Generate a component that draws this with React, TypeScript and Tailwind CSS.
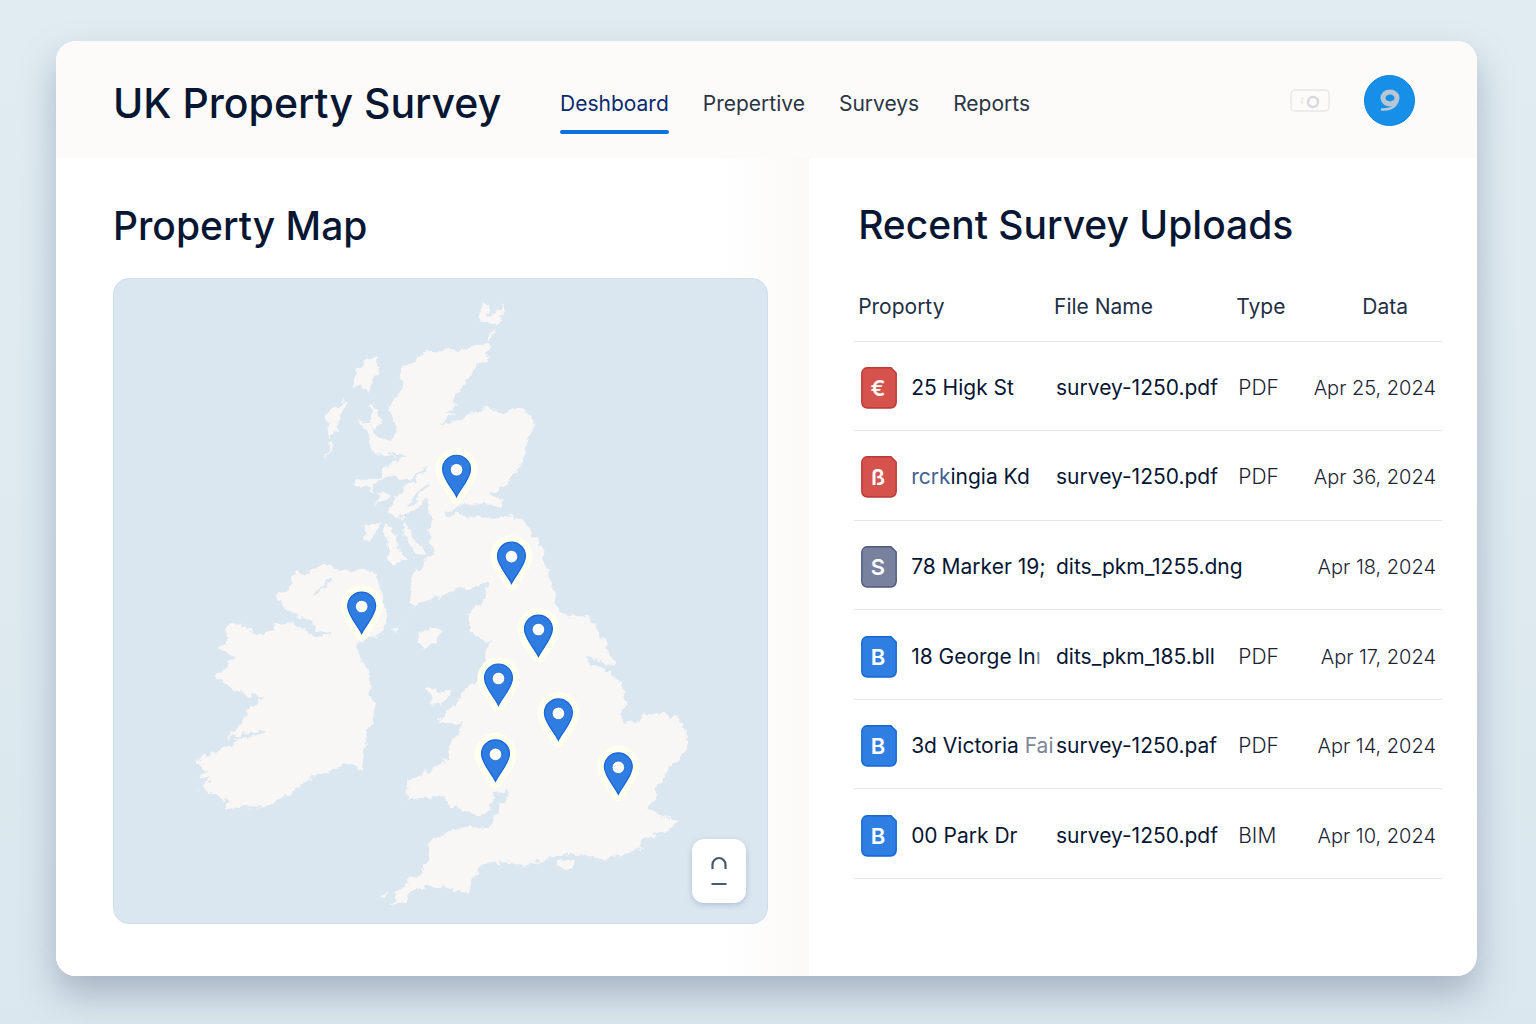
import React from "react";

const navItems = ["Deshboard", "Prepertive", "Surveys", "Reports"];

const pins = [
    { x: 456, y: 497, name: "Edinburgh" },
    { x: 511, y: 584, name: "Newcastle" },
    { x: 361, y: 634, name: "Belfast" },
    { x: 538, y: 657, name: "Leeds" },
    { x: 498, y: 706, name: "Liverpool" },
    { x: 558, y: 741, name: "Nottingham" },
    { x: 495, y: 782, name: "Cardiff" },
    { x: 618, y: 795, name: "London" },
];

const colors = {
    red: { fill: "#d5524d", stroke: "#b93a37" },
    slate: { fill: "#78829f", stroke: "#4d5a80" },
    blue: { fill: "#2f7fe2", stroke: "#1767d3" },
};

type Upload = {
    letter: string;
    color: keyof typeof colors;
    faded?: string;
    property: string;
    tail?: string;
    file: string;
    type: string;
    date: string;
};

const uploads: Upload[] = [
    { letter: "€", color: "red", property: "25 Higk St", file: "survey-1250.pdf", type: "PDF", date: "Apr 25, 2024" },
    { letter: "ß", color: "red", faded: "rcrk", property: "ingia Kd", file: "survey-1250.pdf", type: "PDF", date: "Apr 36, 2024" },
    { letter: "S", color: "slate", property: "78 Marker 19;", file: "dits_pkm_1255.dng", type: "", date: "Apr 18, 2024" },
    { letter: "B", color: "blue", property: "18 George In", tail: "ı", file: "dits_pkm_185.bll", type: "PDF", date: "Apr 17, 2024" },
    { letter: "B", color: "blue", property: "3d Victoria ", tail: "Fai", file: "survey-1250.paf", type: "PDF", date: "Apr 14, 2024" },
    { letter: "B", color: "blue", property: "00 Park Dr", file: "survey-1250.pdf", type: "BIM", date: "Apr 10, 2024" },
];

function FileBadge({ letter, color }: { letter: string; color: keyof typeof colors }) {
    const c = colors[color];
    return (
        <svg width="36" height="42" viewBox="0 0 36 42" className="shrink-0" aria-hidden="true">
            <path
                d="M6 .8H30L35.200 6V35.500a5.500 5.500 0 0 1-5.500 5.500H6.300A5.500 5.500 0 0 1 .8 35.500V6.300A5.500 5.500 0 0 1 6 .8Z"
                fill={c.fill}
                stroke={c.stroke}
                strokeWidth="1.4"
            />
            <text x="17" y="29" textAnchor="middle" fill="#fff" fontSize="22" fontWeight="600" fontFamily="Inter, sans-serif">
                {letter}
            </text>
        </svg>
    );
}

function Pin({ x, y, name }: { x: number; y: number; name: string }) {
    const shape = "M0 0C-3-7-14-18-14-27.500A14 14 0 0 1 14-27.500C14-18 3-7 0 0Z";
    return (
        <g transform={`translate(${x} ${y})`}>
            <title>{name}</title>
            <path d={shape} fill="#fffff0" stroke="#fffff0" strokeWidth="14" strokeLinejoin="round" />
            <path d={shape} fill="#2f7de0" stroke="#1864d6" strokeWidth="1.2" />
            <circle cy="-27" r="6.300" fill="#fff" stroke="#1864d6" strokeWidth=".8" />
        </g>
    );
}

function UkMap() {
    return (
        <svg viewBox="113 279 654 645" className="block w-full" role="img" aria-label="Map of surveyed properties">
            <defs>
                <filter id="coast" x="-5%" y="-5%" width="110%" height="110%">
                    <feTurbulence type="fractalNoise" baseFrequency="0.11" numOctaves="4" seed="4" />
                    <feDisplacementMap in="SourceGraphic" scale="11" xChannelSelector="R" yChannelSelector="G" />
                </filter>
            </defs>
            <g fill="#f9f7f6" filter="url(#coast)">
                {/* Great Britain */}
                <path d="M490 343L486 358 475 367 466 382 455 394 452 400 456 406 446 412 455 414 438 423 452 424 465 418 480 410 492 409 505 412 517 408 527 412 534 421 532 432 527 442 523 458 517 472 508 482 498 490 489 493 498 497 503 508 488 505 475 506 462 504 456 509 446 514 470 517 490 518 510 517 520 520 529 528 533 536 539 547 545 565 548 580 554 592 556 604 558 613 567 616 585 616 595 625 597 635 606 641 605 650 611 656 613 666 600 663 583 656 590 665 600 668 610 672 620 682 624 692 624 702 619 715 624 722 636 722 645 716 662 713 675 719 686 730 686 745 680 758 670 767 666 777 659 784 655 790 656 800 650 806 648 812 660 817 679 820 672 828 660 834 645 840 640 848 625 856 608 858 597 860 583 855 570 854 557 858 537 863 520 867 505 863 487 863 477 872 469 880 469 887 465 893 454 893 449 887 430 887 417 890 410 895 403 902 391 905 400 897 397 893 403 887 408 880 425 870 430 853 428 845 440 838 450 832 470 828 488 828 494 815 503 803 508 789 495 793 492 803 488 813 477 817 457 810 443 798 430 798 408 800 405 783 417 777 443 767 448 750 457 733 461 722 447 723 438 721 453 708 460 694 477 682 485 655 488 642 477 637 467 623 468 613 482 603 488 585 470 587 450 592 437 598 413 607 409 597 413 577 423 563 435 550 428 540 432 520 428 513 427 497 413 513 397 518 387 510 397 497 413 480 393 478 377 480 383 467 407 457 387 450 397 433 395 420 387 408 397 397 403 387 400 377 403 368 415 360 420 352 447 351 467 348Z" />
                {/* Ireland */}
                <path d="M323 565L330 568 353 572 370 569 377 580 382 597 388 620 383 632 367 640 357 645 360 657 367 673 368 693 375 707 370 727 363 750 360 770 343 765 330 773 313 777 297 790 280 798 267 807 240 807 223 812 228 800 200 790 210 780 200 777 207 770 195 767 203 757 223 750 238 742 225 740 240 727 247 712 263 697 240 695 215 677 232 657 217 647 227 640 223 627 240 625 260 637 280 623 293 623 310 635 320 638 332 630 320 632 303 620 288 613 277 598 287 590 293 575 310 572Z" />
                {/* Northern and western isles */}
                <path d="M376 357L378 370 367 390 352 384 357 370 366 360ZM347 399L339 420 330 441 328 428 324 417ZM334 442L325 461 328 446ZM482 302L488 304 487 317 496 314 504 306 503 313 495 325 478 320ZM494 326L490 342 487 334ZM357 419L369 424 376 438 392 444 386 452 396 459 372 452 367 437ZM372 405L381 415 375 432 368 422ZM350 484L362 478 377 478 371 492ZM378 493L392 493 376 506ZM363 527L380 520 370 542 364 538ZM385 522L392 530 404 560 391 565 386 550ZM402 518L412 535 425 556 416 556 404 536Z" />
                {/* Isle of Man, Anglesey, Isle of Wight */}
                <path d="M418 635L428 631 440 630 436 644 423 648 419 643ZM425 686L436 691 453 692 443 704 431 708ZM555 865L564 859 577 861 567 871ZM392 628L399 626 397 635ZM378 896L385 892 384 899Z" />
            </g>
            {/* Sea lochs */}
            <g fill="none" stroke="#dbe7f0" strokeWidth="3" strokeLinecap="round" filter="url(#coast)">
                <path d="M396 494L424 470M410 504L426 486M330 578L316 594M228 740L262 733M446 514L480 512" />
            </g>
            {pins.map((pin) => (
                <Pin key={pin.name} {...pin} />
            ))}
        </svg>
    );
}

export default function App() {
    return (
        <div className="min-h-screen bg-gradient-to-b from-[#e1ecf2] to-[#dbe7ee] pt-[41px] pr-[59px] pb-12 pl-14 font-[Inter,sans-serif] text-[#061633]">
            <div className="overflow-hidden rounded-[20px] bg-white shadow-[0_18px_36px_rgba(80,95,125,0.38)]">
                {/* ===== Header ===== */}
                <header className="flex h-[117px] items-center bg-[#fcfbf9] pr-[62px] pl-[57px]">
                    <h1 className="w-[447px] pt-1.5 text-[41px] leading-[48px] font-medium whitespace-nowrap">UK Property Survey</h1>
                    <nav className="flex gap-[34px] pt-6 text-[21px] leading-7 text-[#2b3444]">
                        {navItems.map((item, i) => (
                            <a key={item} href="#" className={i === 0 ? "text-[#0a2a6c]" : ""}>
                                {item}
                                <span
                                    className={
                                        i === 0
                                            ? "mt-3 block h-1 rounded-full bg-[#0f72dc]"
                                            : "mt-3 block h-1"
                                    }
                                />
                            </a>
                        ))}
                    </nav>
                    <div className="ml-auto flex items-center gap-[34px] pt-0.5">
                        <button type="button" aria-label="Camera">
                            <svg width="40" height="24" viewBox="0 0 40 24" fill="none" stroke="#e8e8e9">
                                <rect x="1" y="1" width="38" height="21" rx="4" strokeWidth="1.5" />
                                <path d="M12 15V10l2-1" strokeWidth="1.5" />
                                <circle cx="23" cy="13" r="5" stroke="#d8d9dc" strokeWidth="2.500" />
                            </svg>
                        </button>
                        <button
                            type="button"
                            aria-label="Account"
                            className="flex size-[51px] items-center justify-center rounded-full border border-[#0b80df] bg-[#158fe8]"
                        >
                            <svg width="22" height="24" viewBox="0 0 22 24" fill="none" stroke="#b9c6d4" strokeLinecap="round">
                                <ellipse cx="11" cy="9" rx="7" ry="6" strokeWidth="5" />
                                <path d="M18.500 9C19 16 13 21 3 20.500" strokeWidth="2.500" />
                            </svg>
                        </button>
                    </div>
                </header>

                <main className="grid grid-cols-[53fr_47fr]">
                    {/* ===== Property map ===== */}
                    <section className="bg-[linear-gradient(to_right,#ffffff_88%,#fbf9f8)] pt-11 pr-[41px] pb-[52px] pl-[57px]">
                        <h2 className="text-[39px] leading-[48px] font-medium">Property Map</h2>
                        <div className="relative mt-7 overflow-hidden rounded-2xl border border-[#cddeea] bg-[#dbe7f0]">
                            <UkMap />
                            <button
                                type="button"
                                aria-label="Map view"
                                className="absolute right-[21px] bottom-5 flex h-16 w-[54px] items-center justify-center rounded-xl bg-white shadow-[0_2px_6px_rgba(90,125,160,0.35)]"
                            >
                                <svg width="18" height="30" viewBox="0 0 18 30" fill="none" stroke="#475a70" strokeWidth="2.200">
                                    <path d="M2.500 13V8.500a6.500 6.500 0 0 1 13 0V13M1.500 28H16.500" />
                                </svg>
                            </button>
                        </div>
                    </section>

                    {/* ===== Recent uploads ===== */}
                    <section className="pt-[43px] pr-[35px] pl-[45px]">
                        <h2 className="pl-1 text-[39px] leading-[48px] font-medium">Recent Survey Uploads</h2>
                        <table className="mt-[17px] h-[613px] w-full table-fixed text-left text-[21px] leading-7 whitespace-nowrap">
                            <colgroup>
                                <col className="w-[34%]" />
                                <col className="w-[31%]" />
                                <col className="w-[11%]" />
                                <col />
                            </colgroup>
                            <thead>
                                <tr className="h-[75px] border-b border-[#e6e7e9] text-[#222f45]">
                                    <th className="pt-2 pl-1 font-normal">Proporty</th>
                                    <th className="pt-2 font-normal">File Name</th>
                                    <th className="pt-2 font-normal">Type</th>
                                    <th className="pt-2 pr-[34px] text-right font-normal">Data</th>
                                </tr>
                            </thead>
                            <tbody>
                                {uploads.map((u, i) => (
                                    <tr key={i} className="border-b border-[#e6e7e9]">
                                        <td className="pt-1">
                                            <div className="flex items-center gap-3.5 pl-[7px]">
                                                <FileBadge letter={u.letter} color={u.color} />
                                                <span className="whitespace-pre">
                                                    {u.faded && <span className="text-[#416292]">{u.faded}</span>}
                                                    {u.property}
                                                    {u.tail && <span className="text-[#7b8799]">{u.tail}</span>}
                                                </span>
                                            </div>
                                        </td>
                                        <td className="pt-1 pl-0.5">{u.file}</td>
                                        <td className="pt-1 pl-0.5 font-light text-[#1b2433]">{u.type}</td>
                                        <td className="pt-1 pr-1.5 text-right text-xl font-light text-[#1b2433]">{u.date}</td>
                                    </tr>
                                ))}
                            </tbody>
                        </table>
                    </section>
                </main>
            </div>
        </div>
    );
}
